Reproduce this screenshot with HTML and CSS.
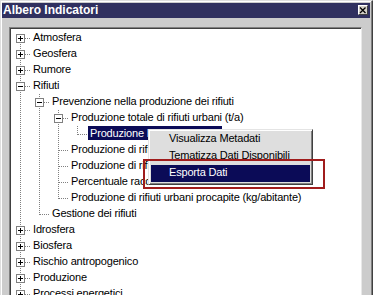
FILE: index.html
```html
<!DOCTYPE html>
<html lang="it">
<head>
<meta charset="utf-8">
<title>Albero Indicatori</title>
<link rel="stylesheet" href="styles.css">
</head>
<body>
<div class="window">
  <div class="titlebar">
    <span class="title">Albero Indicatori</span>
    <span class="close"><svg width="8" height="8" viewBox="0 0 8 8"><path d="M1 1.5 L6.5 7 M6.5 1.5 L1 7" stroke="#000" stroke-width="1.3" fill="none"/></svg></span>
  </div>
  <div class="tree">
    <div class="row"><span class="c first"><i class="box plus"></i></span><span class="lbl">Atmosfera</span></div>
    <div class="row"><span class="c tee"><i class="box plus"></i></span><span class="lbl">Geosfera</span></div>
    <div class="row"><span class="c tee"><i class="box plus"></i></span><span class="lbl">Rumore</span></div>
    <div class="row"><span class="c tee"><i class="box minus"></i></span><span class="lbl">Rifiuti</span></div>
    <div class="row"><span class="g v"></span><span class="c tee"><i class="box minus"></i></span><span class="lbl">Prevenzione nella produzione dei rifiuti</span></div>
    <div class="row"><span class="g v"></span><span class="g v"></span><span class="c tee"><i class="box minus"></i></span><span class="lbl">Produzione totale di rifiuti urbani (t/a)</span></div>
    <div class="row"><span class="g v"></span><span class="g v"></span><span class="g v"></span><span class="c elbow"></span><span class="lbl sel">Produzione Provinciale (t/a)</span></div>
    <div class="row"><span class="g v"></span><span class="g v"></span><span class="c tee"></span><span class="lbl">Produzione di rifiuti speciali (t/a)</span></div>
    <div class="row"><span class="g v"></span><span class="g v"></span><span class="c tee"></span><span class="lbl">Produzione di rifiuti pericolosi</span></div>
    <div class="row"><span class="g v"></span><span class="g v"></span><span class="c tee"></span><span class="lbl">Percentuale raccolta differenziata</span></div>
    <div class="row"><span class="g v"></span><span class="g v"></span><span class="c elbow"></span><span class="lbl">Produzione di rifiuti urbani procapite (kg/abitante)</span></div>
    <div class="row"><span class="g v"></span><span class="c elbow"></span><span class="lbl">Gestione dei rifiuti</span></div>
    <div class="row"><span class="c tee"><i class="box plus"></i></span><span class="lbl">Idrosfera</span></div>
    <div class="row"><span class="c tee"><i class="box plus"></i></span><span class="lbl">Biosfera</span></div>
    <div class="row"><span class="c tee"><i class="box plus"></i></span><span class="lbl">Rischio antropogenico</span></div>
    <div class="row"><span class="c tee"><i class="box plus"></i></span><span class="lbl">Produzione</span></div>
    <div class="row"><span class="c tee"><i class="box plus"></i></span><span class="lbl">Processi energetici</span></div>
  </div>
</div>
<div class="menu">
  <div class="item">Visualizza Metadati</div>
  <div class="item">Tematizza Dati Disponibili</div>
  <div class="item active">Esporta Dati</div>
</div>
<div class="annot"></div>
</body>
</html>
```
FILE: styles.css
```css
html, body {
  margin: 0;
  padding: 0;
  background: #cccccc;
}
body {
  width: 373px;
  height: 295px;
  overflow: hidden;
  font-family: "Liberation Sans", Arial, sans-serif;
}
.window {
  box-sizing: border-box;
  width: 373px;
  height: 295px;
  overflow: hidden;
  background: #cccccc;
  border-top: 1px solid #dedede;
  border-left: 1px solid #dedede;
  border-right: 1px solid #404040;
  box-shadow: inset -1px 0 #808080, inset 1px 1px #ffffff;
  padding: 2px 2px 0 1px;
}
.titlebar {
  display: flex;
  justify-content: space-between;
  align-items: flex-start;
  height: 15px;
  background: #30305f;
  padding: 0 2px 0 1px;
}
.title {
  color: #fff;
  font-weight: bold;
  font-size: 12px;
  line-height: 15px;
}
.close {
  box-sizing: border-box;
  width: 10px;
  height: 10px;
  margin-top: 2px;
  background: #d4d0c8;
  border: 1px solid;
  border-color: #ffffff #404040 #404040 #ffffff;
  display: flex;
  align-items: center;
  justify-content: center;
}
.close svg { display: block; }
.tree {
  margin: 9px 0 0 7px;
  width: 353px;
  height: 280px;
  box-sizing: border-box;
  border-style: solid;
  border-width: 1px 1px 0 1px;
  border-color: #808080 #e8e8e8 transparent #808080;
  box-shadow: inset 1px 1px #404040;
  background: #fff;
  padding: 2px 0 0 1px;
  overflow: hidden;
}
.row {
  display: flex;
  height: 16px;
}
.g, .c {
  flex: none;
  width: 19px;
  height: 16px;
  box-sizing: border-box;
  padding: 4px 0 0 5px;
}
.g.v {
  background: repeating-linear-gradient(to bottom, #808080 0 1px, transparent 1px 2px) 9px 0 / 1px 16px no-repeat;
}
.c.tee {
  background:
    repeating-linear-gradient(to right, #808080 0 1px, transparent 1px 2px) 10px 8px / 10px 1px no-repeat,
    repeating-linear-gradient(to bottom, #808080 0 1px, transparent 1px 2px) 9px 0 / 1px 16px no-repeat;
}
.c.elbow {
  background:
    repeating-linear-gradient(to right, #808080 0 1px, transparent 1px 2px) 10px 8px / 10px 1px no-repeat,
    repeating-linear-gradient(to bottom, #808080 0 1px, transparent 1px 2px) 9px 0 / 1px 9px no-repeat;
}
.c.first {
  background:
    repeating-linear-gradient(to right, #808080 0 1px, transparent 1px 2px) 10px 8px / 10px 1px no-repeat,
    repeating-linear-gradient(to bottom, #808080 0 1px, transparent 1px 2px) 9px 8px / 1px 8px no-repeat;
}
.box {
  display: block;
  box-sizing: border-box;
  width: 9px;
  height: 9px;
  border: 1px solid #808080;
  background: #fff;
}
.box.minus {
  background: linear-gradient(#000, #000) center / 5px 1px no-repeat, #fff;
}
.box.plus {
  background:
    linear-gradient(#000, #000) center / 5px 1px no-repeat,
    linear-gradient(#000, #000) center / 1px 5px no-repeat,
    #fff;
}
.lbl {
  flex: none;
  margin: 0 0 0 1px;
  padding: 0 2px;
  height: 14px;
  line-height: 14px;
  font-size: 11px;
  letter-spacing: -0.18px;
  white-space: nowrap;
  color: #000;
}
.lbl.sel {
  background: #0b0b57;
  color: #fff;
}
.menu {
  position: absolute;
  left: 148px;
  top: 129px;
  width: 165px;
  box-sizing: border-box;
  background: #dedede;
  border: 1px solid;
  border-color: #e4e4e4 #404040 #404040 #e4e4e4;
  box-shadow: inset 1px 1px #ffffff, inset -1px -1px #808080;
  padding: 1px 2px 2px;
}
.item {
  height: 17px;
  line-height: 15px;
  padding-left: 18px;
  box-sizing: border-box;
  padding-bottom: 2px;
  font-size: 11px;
  letter-spacing: -0.18px;
  white-space: nowrap;
  color: #000;
}
.item.active {
  background: #0b0b57;
  color: #fff;
}
.annot {
  position: absolute;
  left: 143px;
  top: 159px;
  width: 182px;
  height: 30px;
  box-sizing: border-box;
  border: 2px solid #a01c1c;
}
```
